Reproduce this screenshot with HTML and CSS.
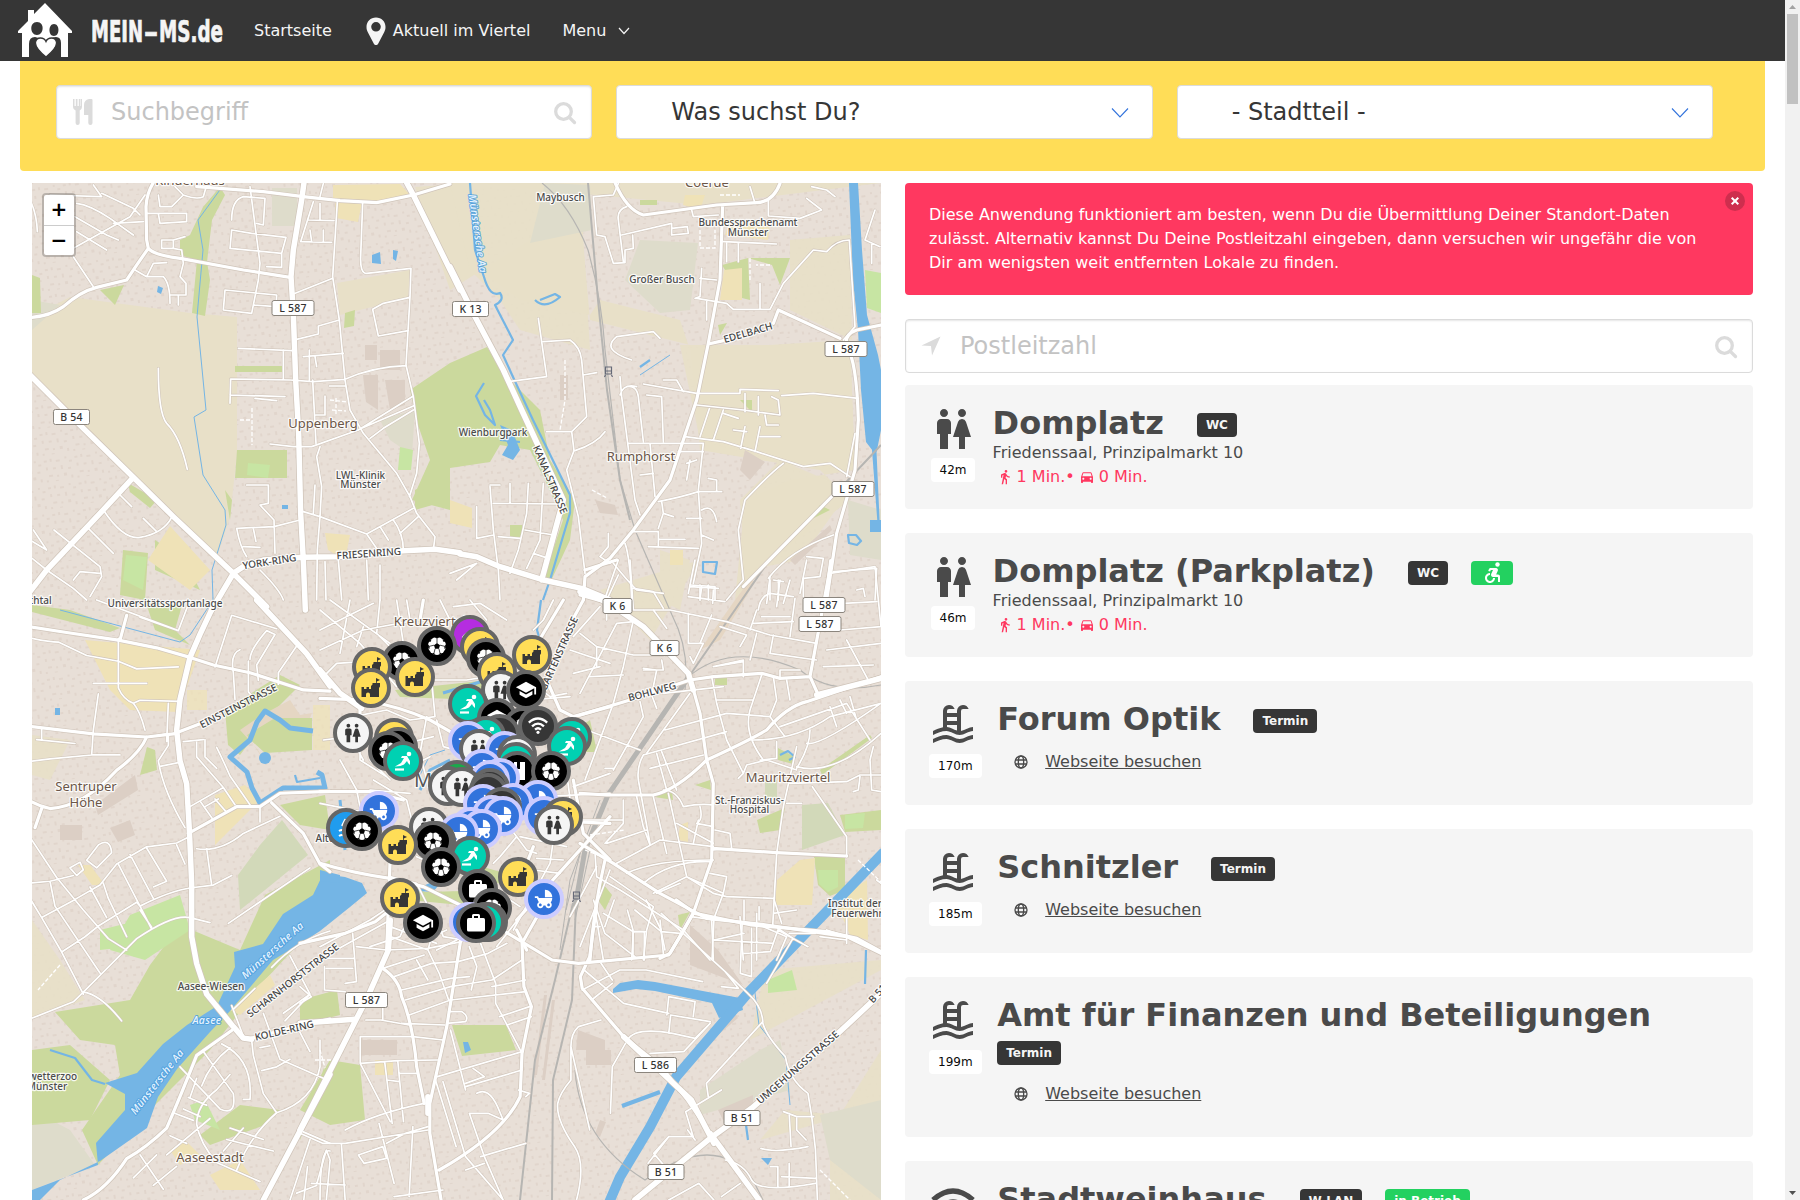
FILE: index.html
```html
<!DOCTYPE html>
<html lang="de">
<head>
<meta charset="utf-8">
<title>MEIN-MS.de</title>
<link rel="stylesheet" href="styles.css">
</head>
<body>
<svg class="sprite" width="0" height="0" aria-hidden="true">
<defs>
<symbol id="i-wc" viewBox="0 0 24 24"><path d="M5.500 22v-7.500H4V9c0-1.100.9-2 2-2h3c1.100 0 2 .9 2 2v5.500H9.500V22h-4zM18 22v-6h3l-2.540-7.630A2.010 2.010 0 0 0 16.560 7h-.12a2 2 0 0 0-1.900 1.370L12 16h3v6h3zM7.500 6c1.110 0 2-.89 2-2s-.89-2-2-2-2 .89-2 2 .89 2 2 2zm9 0c1.110 0 2-.89 2-2s-.89-2-2-2-2 .89-2 2 .89 2 2 2z"/></symbol>
<symbol id="i-pool" viewBox="0 0 24 24"><path d="M2 15c1.670-.75 3.330-1.500 5-1.830V5a3 3 0 0 1 3-3c1.310 0 2.420.83 2.830 2H10a1 1 0 0 0-1 1v1h5V5a3 3 0 0 1 3-3c1.310 0 2.420.83 2.830 2H17a1 1 0 0 0-1 1v9.940c2-.32 4-1.940 6-1.940v2c-2.220 0-4.440 2-6.670 2-2.220 0-4.440-2-6.660-2-2.230 0-4.450 1-6.670 2v-2m12-7H9v2h5V8m0 4H9v1c1.670.16 3.330 1.310 5 1.790V12M2 19c2.220-1 4.440-2 6.670-2 2.220 0 4.440 2 6.660 2 2.230 0 4.450-2 6.670-2v2c-2.220 0-4.440 2-6.670 2-2.220 0-4.440-2-6.660-2-2.230 0-4.450 1-6.670 2v-2z"/></symbol>
<symbol id="i-wifi" viewBox="0 0 24 24"><g fill="none" stroke="currentColor" stroke-width="2.600"><path d="M2 9.500Q12 .5 22 9.500"/><path d="M5.500 13.500Q12 7.500 18.500 13.500"/><path d="M8.800 17Q12 14 15.200 17"/></g><circle cx="12" cy="20" r="1.700"/></symbol>
<symbol id="i-walk" viewBox="0 0 24 24"><path d="M13.500 5.500c1.100 0 2-.9 2-2s-.9-2-2-2-2 .9-2 2 .9 2 2 2zM9.800 8.900L7 23h2.100l1.800-8 2.100 2v6h2v-7.500l-2.100-2 .6-3C14.800 12 16.800 13 19 13v-2c-1.900 0-3.500-1-4.300-2.400l-1-1.600c-.4-.6-1-1-1.700-1-.3 0-.5.1-.8.1L6 8.300V13h2V9.600l1.800-.7"/></symbol>
<symbol id="i-car" viewBox="0 0 24 24"><path d="M18.920 6.010C18.720 5.420 18.160 5 17.500 5h-11c-.66 0-1.210.42-1.420 1.010L3 12v8c0 .55.45 1 1 1h1c.55 0 1-.45 1-1v-1h12v1c0 .55.45 1 1 1h1c.55 0 1-.45 1-1v-8l-2.080-5.990zM6.500 16c-.83 0-1.500-.67-1.500-1.500S5.670 13 6.500 13s1.500.67 1.500 1.500S7.330 16 6.500 16zm11 0c-.83 0-1.500-.67-1.500-1.500s.67-1.500 1.500-1.500 1.500.67 1.500 1.500-.67 1.500-1.500 1.500zM5 11l1.500-4.500h11L19 11H5z"/></symbol>
<symbol id="i-globe" viewBox="0 0 24 24"><g fill="none" stroke="currentColor" stroke-width="2"><circle cx="12" cy="12" r="9"/><ellipse cx="12" cy="12" rx="4" ry="9"/><path d="M3.500 9h17M3.500 15h17"/></g></symbol>
<symbol id="i-access" viewBox="0 0 24 24"><circle cx="17.500" cy="3.500" r="2.200"/><path d="M15 17h-2c0 1.650-1.350 3-3 3s-3-1.350-3-3 1.350-3 3-3v-2c-2.760 0-5 2.240-5 5s2.240 5 5 5 5-2.240 5-5zm3-3.500h-1.860l1.670-3.670C18.420 8.500 17.440 7 15.960 7h-5.200c-.81 0-1.540.47-1.870 1.200L8.220 10l1.920.53.65-1.530H13l-1.830 4.100c-.6 1.330.39 2.900 1.850 2.900H18v5h2v-5.500c0-1.100-.9-2-2-2z"/></symbol>
<symbol id="i-search" viewBox="0 0 24 24"><g fill="none" stroke="currentColor" stroke-width="3.300" stroke-linecap="round"><circle cx="10.500" cy="10.500" r="7.800"/><path d="M16.800 16.800L21.500 21.500"/></g></symbol>
<symbol id="i-school" viewBox="0 0 24 24"><path d="M5 13.180v4L12 21l7-3.820v-4L12 17l-7-3.820zM12 3L1 9l11 6 9-4.910V17h2V9L12 3z"/></symbol>
<symbol id="i-pram" viewBox="0 0 24 24"><path d="M13 2v8h8c0-4.420-3.580-8-8-8zm6.320 13.890C20.370 14.540 21 12.840 21 11H6.440l-.95-2H2v2h2.220s1.890 4.070 2.120 4.420c-1.100.59-1.840 1.750-1.840 3.080C4.500 20.430 6.070 22 8 22c1.760 0 3.220-1.300 3.460-3h2.080c.24 1.700 1.700 3 3.460 3 1.930 0 3.500-1.570 3.500-3.500 0-1.040-.46-1.970-1.180-2.610zM8 20c-.83 0-1.500-.67-1.500-1.500S7.170 17 8 17s1.500.67 1.500 1.500S8.830 20 8 20zm9 0c-.83 0-1.500-.67-1.500-1.500S16.170 17 17 17s1.500.67 1.500 1.500S17.830 20 17 20z"/></symbol>
<g id="m-ball"><circle r="18" fill="#000" stroke="#666" stroke-width="4"/><circle r="9" fill="#fff"/><path d="M0-3L3-.8 1.900 2.700h-3.800L-3-.8zM-2.500-8.700L0-7.200l2.500-1.500q-2.500-.7-5 0zM9-1.500L7.200.2 7.700 3.200l1.100-1.200zM-9-1.500L-7.200.2-7.700 3.200l-1.100-1.200zM5.300 7.300L2.800 7l-.8 1.900zM-5.300 7.300L-2.800 7l.8 1.900zM5.700-7l.3 2.600 2.200.4zM-5.700-7l-.3 2.600-2.200.4z" fill="#000"/><path d="M0-3v-4M3-.8l4.200 1M1.900 2.700L3 7M-1.900 2.700L-3 7M-3-.8l-4.200 1" stroke="#000" stroke-width=".7"/></g>
<g id="m-castle"><circle r="18" fill="#ffdd57" stroke="#666" stroke-width="4"/><path d="M-9.500 9V-1h2.500v2h2.500v-2h2.500v2H0v-3l1.500-1.500V-5H5v-5l4 2-3.200 1.500V-5H9v3.500L8 0v9H-1V6.500a2 2 0 0 0-4 0V9z" fill="#363636"/></g>
<g id="m-wc"><circle r="18" fill="#f5f5f5" stroke="#666" stroke-width="4"/><use href="#i-wc" x="-11.500" y="-11" width="22" height="22" fill="#363636"/></g>
<g id="m-slide"><circle r="18" fill="#00d1b2" stroke="#666" stroke-width="4"/><path d="M-8 8.500H1" stroke="#fff" stroke-width="2.200"/><path d="M-8 5.500l6-3.500 3-5-3 0 1-2H4l3 5 0 4-2-2-1-2-3 3.500q-3 2-8.500 2z" fill="#fff"/><circle cx="6" cy="-7" r="2.300" fill="#fff"/></g>
<g id="m-pram"><circle r="18" fill="#3273dc" stroke="#ccf" stroke-width="4"/><use href="#i-pram" x="-11" y="-11" width="22" height="22" fill="#fff"/></g>
<g id="m-school"><circle r="18" fill="#000" stroke="#666" stroke-width="4"/><use href="#i-school" x="-11" y="-11" width="22" height="22" fill="#fff"/></g>
<g id="m-bag"><circle r="18" fill="#000" stroke="#666" stroke-width="4"/><rect x="-9" y="-5" width="18" height="13.500" rx="1.500" fill="#fff"/><path d="M-3-5v-2.500q0-.5.500-.5h5q.5 0 .5.500V-5" fill="none" stroke="#fff" stroke-width="2"/></g>
<g id="m-dark"><circle r="18" fill="#363636" stroke="#666" stroke-width="4"/></g>
<g id="m-black"><circle r="18" fill="#000" stroke="#666" stroke-width="4"/><path d="M-3-9H8V9H-3z" fill="#fff"/><path d="M0-9h3v7H0z"/></g>
<g id="m-wifi"><circle r="18" fill="#363636" stroke="#666" stroke-width="4"/><use href="#i-wifi" x="-11" y="-12" width="22" height="22" fill="#fff" color="#fff"/></g>
<g id="m-swim"><circle r="18" fill="#209cee" stroke="#666" stroke-width="4"/><path d="M-7 3q3-2 6 0t6 0M-7 8q3-2 6 0t6 0M-4-2l3-6 5 1" fill="none" stroke="#fff" stroke-width="2"/></g>
<pattern id="houses" width="31" height="27" patternUnits="userSpaceOnUse" patternTransform="rotate(-9)"><path d="M2 3h3v2H2zM8 2h2v3H8zM14 4h4v2h-4zM23 2h2v2h-2zM27 6h3v2h-3zM3 10h2v3H3zM10 11h3v2h-3zM18 10h2v4h-2zM25 13h3v2h-3zM5 18h4v2H5zM13 19h2v2h-2zM20 18h3v3h-3zM27 21h2v3h-2zM2 23h2v2H2zM11 24h3v1h-3z" fill="#dccfc5"/></pattern>

<g id="minor">
<g transform="translate(30 180) scale(.33333)">
<path d="M130 205L300 110 345 45M140 70Q180 75 240 115L310 165M215 40L310 85 330 105M135 110L230 165 265 180M140 155L230 210M130 230L190 320M190 15L215 50 60 45M250 130L340 125M350 100H470V125L390 130 385 100M385 45L390 80 425 80 460 45 435 20M460 45Q500 60 520 50L530 15M0 60Q20 100 22 155"/>
<path d="M395 180H430V205H395ZM430 180L465 170M430 205L455 210 460 250 450 290 468 310V345H420M315 270L350 290 370 250 410 248M350 290H400Q420 310 420 370M445 345V375"/>
<path d="M605 120Q605 60 640 50L705 55 700 135 680 130M660 20L690 250 685 300 665 400M605 150L600 205 755 220 768 172 665 160ZM755 220L755 262 710 260M585 330L580 390 665 400M585 330L740 345 738 380 672 375M850 65L812 185 905 187M870 70V120M835 120L912 122M840 150L845 185M880 150V185M880 10L870 50"/>
<path d="M922 65L908 290 928 420 945 600 960 690 1000 760 1100 880 1140 950 1160 1000 1215 1070 1210 1110M908 295L790 342M928 420L865 438V462L800 478M998 68L992 230Q990 280 1010 280L1143 265 1140 350 1128 555 1150 650 1168 790 1160 880 1138 950M1140 352L1060 370 1028 388 1045 468 1135 452M1128 557Q1030 560 945 598L850 605 780 600 602 597 600 670M760 510V600M625 505L785 512M600 645L765 650M675 655L740 662M838 510V600M820 530L940 520M855 530L860 560M848 600L858 790M885 648V705H858M945 618H898M1150 648L985 750M1150 678L995 745M1150 690L1060 745 1020 775M985 750L845 800 790 800 720 792"/>
<path d="M870 800L860 830 875 920 870 1010 862 1110 860 1260M855 915L850 1000M820 995L870 1010 1010 1062 1050 1120M1010 1062L1150 985M1050 1040L1075 1080M1090 1020Q1120 1060 1120 1110M1165 1010L1110 1060M650 915L715 915V970L690 975 732 1020 735 1120M620 1045L732 1040 810 1020M620 1045Q630 1100 650 1130M670 1045L678 1085M640 1100L690 1102M270 945L305 980M220 990Q280 1080 330 1072 400 1060 425 1012M340 1015L380 1055M175 1045L250 1120M72 1050L210 1160 215 1190 180 1250M130 1200L150 1175 210 1180M0 1130L50 1170 130 1225 170 1260M0 1080L50 1110 10 1050M385 565Q385 700 410 730 450 770 472 868M885 1145L888 1260M925 1140L935 1260M1010 1140L1015 1260M1050 1155V1260M690 1170Q750 1230 760 1260"/>
</g>
<g transform="translate(450 180) scale(.33333)">
<path d="M430 50L490 45 505 10M430 50L440 165 465 170 490 250 525 248 525 210 550 205 548 165M530 80Q500 90 505 120L520 245M515 165L665 130 665 165 715 160 712 140 665 145M725 90L730 110 805 105M955 60V108L1050 115 1115 90 1070 55M900 20L915 70M1085 20L1130 30 1155 50M755 265L750 350 735 355M750 295L800 300M820 185L980 192M830 190V245M865 190V245M740 355L830 370 850 388 960 388 1000 310M1000 310L1090 210 1130 215Q1160 180 1198 180L1215 440 1180 480M930 310V388M985 390L970 430M770 365V420M265 415L290 590 175 605M280 485L360 480Q390 500 395 540L410 710 365 755M290 755L365 755 372 812 350 870 385 1010 405 1180M375 812Q440 790 465 755M400 585L440 578M545 540Q450 510 500 470L610 455 630 475"/>
<path d="M510 590L515 650 555 960 570 1005M530 620Q560 615 565 650L580 785M510 645Q520 610 560 620M590 645L635 650 640 785M535 790L760 790M600 790L615 950M570 885L610 880M580 612L740 640 870 640 870 628 985 632M995 647L1090 640 1225 655M640 600L680 600 700 635M740 675L880 690 990 705 985 660 965 650M780 680L750 770M820 690L790 780M885 640V695M925 650V705M945 705L950 735 985 735M705 770L820 785 920 815 1060 860 1140 850 1200 890M885 740L872 805M930 740L915 815M930 770H990M850 750L890 755M820 700L865 715M685 815H760M760 790L745 930 755 1090 730 1210M720 840L710 900M740 840L710 850M775 895L800 900V935M745 935H815M625 965Q700 950 745 935M635 965L640 1000 670 1010M640 1000L625 1045M710 1015H755M755 990Q790 970 800 1025M755 1065L790 1080M550 1055L625 1055 625 1100M595 1100L745 1105M625 1078H705"/>
<path d="M1000 850Q960 880 885 960L865 1050 880 1200 830 1260M955 1195Q1020 1110 1150 1065M1070 1130L1120 1135 1110 1190M1060 1250L1060 1195 1110 1190M1150 1175L1280 1165 1275 1260M970 1200L1000 1205M960 1200V1260M985 1200V1260M1215 760L1190 890M1275 90L1245 180 1290 200M1265 190V250M120 920L130 1050 145 1170 150 1260M150 915H120M130 970L330 972M80 980V1075L130 1065M180 910V970M235 910L230 1000 205 1110 180 1180M280 910L270 1080 230 1165M145 1070L210 1075M225 1050L310 1065M250 1120L295 1135M0 1180L80 1150M80 1150L20 1200M475 1060V1100L450 1130 480 1150M525 1090Q540 1130 545 1260M490 1150Q530 1200 560 1230L640 1240M505 1185L470 1260M720 1215L795 1220V1260M750 1215V1260M775 1215V1260"/>
</g>
<g transform="translate(30 600) scale(.33333 .38265)">
<path d="M6 100Q60 110 85 110L170 145 265 160 320 180 445 175M265 100L265 230Q280 260 310 270 330 290 345 340M310 270L330 262 450 265M190 218H350M205 245L190 340 185 405M0 422L60 415 185 405 270 405M35 335V365M20 365L135 375M415 270L410 370M480 0L445 80 200 0M445 80L330 45M345 360L410 350M415 350V380L385 420Q400 500 465 595M390 435L445 425M460 370L520 365M500 368V410L580 490 615 535M525 365V410L560 440M560 385Q580 420 600 460L660 535M480 540L580 490M510 525L550 575M555 520L590 555M525 540L565 520M605 40L740 75M605 40L555 175M630 130Q600 140 610 190L615 260M660 155Q660 130 710 80L735 90 680 170 685 210M655 160V240L665 250M800 120L745 190 745 220M0 740L60 735 130 720M0 620L80 725 160 810 235 885 290 915M0 780L35 830 95 920 160 1030M60 735L75 800 210 975M35 830L130 785 210 745 260 690 350 645 440 635 475 620M95 920L165 880 205 852 320 790 330 800Q420 760 485 752L550 745 605 720M220 740L235 780 290 880M120 700L150 685 160 705 140 720ZM170 680L200 700 245 660Q240 620 205 640ZM180 750L230 830M265 690L330 800 365 860M300 665L370 780M350 648L410 735 370 750M330 810L365 855M160 1025L320 885Q430 820 480 830L540 843M0 1095L130 1050 160 1025Q210 1030 275 1100"/>
<path d="M500 650Q570 660 640 610L750 565M530 650L545 745M690 540V580M440 640L465 690M595 845L840 700M515 1270Q540 1210 600 1170M520 1180L610 1290Q620 1350 570 1330L450 1220M575 1160Q670 1200 660 1305L640 1305M665 1150L670 1190 700 1290 740 1340M690 1170L720 1165M695 1230L740 1220 780 1200M780 930L840 1030 760 1080M725 960Q800 890 900 865M840 1030L765 1100M610 1070L675 1015M640 1140L605 1060M700 1080L750 1200 880 1250M810 1130L840 1180M870 1150V1220Q850 1310 740 1340 660 1400 620 1490M500 1250L480 1300M475 1300L530 1320M460 1330L510 1350M430 1340L490 1360M500 1370Q500 1320 560 1280L600 1240M500 1370Q510 1420 560 1470L690 1520M420 1400L470 1420M410 1450L540 1355M640 1380L580 1440M600 1380L700 1410M590 1410L730 1440M330 1450L400 1540M310 1510L380 1450M370 1530L440 1480M820 1390L900 1420M840 1410L780 1568M870 1568Q870 1430 900 1440M860 1530L800 1550"/>
</g>
<g transform="translate(320 600)  scale(.33333)">
<path d="M0 30L120 130 230 260M0 90L100 40 160 10M30 0L210 130M90 0L60 160M130 80L110 140M180 0L170 100 210 140M0 150L130 90 290 60M230 0L250 130 280 190M260 0L270 60M360 0L390 60M350 90L330 190 345 350M400 20L480 10 560 60M450 0L500 60M130 185L50 190 20 220M340 240L440 240 560 220M345 350L270 360 200 330 100 350M700 0L670 60 640 90M840 20L760 110M750 150L870 190M760 220L840 200M740 280L690 290 640 250M760 350L720 410 650 420M630 300L750 290M120 360V480L200 530M150 480L210 540M320 350L300 460 320 540M350 360L370 440 440 460M260 430L340 410M270 500L330 470M10 420L90 410 130 480M860 30V60"/>
</g>
<g transform="translate(320 760) scale(.33333)">
<path d="M60 0L110 90 120 140M0 130L100 150 190 170M150 90L270 100M160 60L260 120 290 240M210 350L290 370 320 430M290 290L380 330M560 190L620 270 650 280M590 230L540 290 520 310M600 230L740 260M660 110L870 100M700 240L690 310 580 510M650 295L730 300M640 330L720 340M600 470L530 560M740 40L760 190M760 80L870 40M830 320L750 470M870 330L780 560M570 420L600 440M350 480L370 530 430 540M410 540L350 570M0 560L150 480 210 440M280 440L240 530 150 560M210 500L350 550"/>
</g>
<g transform="translate(300 900) scale(.37628 .33333)">
<path d="M0 210L240 60M140 100L150 245 120 250M65 200V270L120 275M70 175H145M70 205H140M0 260L30 290 0 310M150 140L230 150 340 145 430 125M240 110L340 150 350 110 390 90M220 205L330 165M250 230L350 190 420 185 500 160 550 130M270 270L400 235 450 230M280 300L400 260 510 240 590 180M290 345L400 300 600 275M310 180L340 240M340 150L370 220 395 300M450 140L470 200 455 270M480 130L520 250 520 310 590 460M510 260L600 240M530 350L610 320M550 375L615 350M395 335H430Q450 350 440 365L390 370M270 370L385 375M175 360H215L290 375M220 310V360M160 410L300 410 380 420M160 410V490L260 482 365 480M160 490L240 665M225 485L245 670M260 485L275 665M365 530L590 455M400 390L440 570M440 550L490 530 460 505M440 560L590 510M470 580Q500 560 525 620L540 660M230 540L265 545M265 520L310 520M380 545L440 770 540 900M360 540L415 740M120 690Q200 640 330 610M0 700L60 730 120 730 340 690M110 730L120 900M155 765L220 740 230 775 170 790ZM210 670L250 850M230 730L280 700 340 680M300 680L290 890M20 800L10 900M30 850L120 855M45 850L70 750 80 780 70 900M450 640L490 770 540 900M480 770L600 730M440 810L490 790M450 640L500 640 540 660M600 590L610 580 580 570M250 890L380 870"/>
<path d="M780 0L810 100 890 170M835 0L810 80M870 30L885 90 885 170M885 95H915V180M890 30L960 95 970 150M920 0L960 90M960 95L1010 100M960 40L1130 215 1190 280M1040 50L1100 60 1095 180M1100 120L1180 100M1175 70L1170 220 1200 230 1200 85M1130 215L1165 265 1120 260M1180 160L1250 155 1270 90M1190 280Q1230 320 1230 370 1240 410 1290 470 1300 540 1350 580L1360 650 1370 750 1375 900M1270 85L1310 115 1240 250M800 360L740 380Q720 400 720 440L770 690M720 440L720 540Q690 580 685 610 680 660 730 740 760 790 735 900M865 430L830 500 825 640M870 420Q890 380 990 400L1050 415 1090 370M1090 365L985 345 980 400M1090 370L1020 455 930 460M980 290L975 345M980 290L1050 305 1045 350M750 270L850 210 920 210 1070 245M755 210L860 310 980 340M775 300L830 250M800 190L830 240M1230 365L1080 550 1085 590M1120 570L1025 635 1045 710 980 710 925 790M1030 690L1050 720M980 710L940 760 970 800M1285 635L1320 650 1365 650M1300 640L1305 740M1320 655V690L1345 720M1225 745Q1260 760 1350 740M1250 800H1270V860M1280 830L1370 835M1300 790V860M1130 780Q1180 790 1200 840 1220 880 1370 850M980 900L1060 850 1100 900M1120 890L1170 850M1180 0L1180 60M1220 20V60M1260 0L1280 70M1270 90L1350 140M1300 100L1370 100"/>
</g>
<g transform="translate(580 560) scale(.33333)">
<path d="M0 220L50 260 160 285 250 285M50 260V320M0 400L110 190 160 185M115 0L70 130M150 0L160 150M160 85L220 95 250 145M160 150L270 150M220 150L260 205M270 150L440 185 570 225 710 250M345 0L325 100M330 80L415 85M365 80L360 120M400 90L398 130M325 110L435 125M325 160V250L370 250 340 310 330 290M395 165L360 250M30 350L130 345M160 180L130 320 100 430 15 660M190 325L230 330 215 405 230 445M245 300L250 330 190 330M180 425L190 470 100 630M75 625L100 625M250 400L430 380M20 510L180 570M200 580L330 400M190 585L440 515M190 585Q170 620 175 660L210 850M230 580L260 690M245 575L290 690M210 625L370 585M255 510L440 460 570 470M395 350L410 430 440 540 490 640 475 655M410 420H520M545 345L510 450Q490 520 550 600M490 350V300L400 320 490 305M420 200L500 225 480 260M530 220L510 300M580 225L570 280 710 300M600 350V330L660 330M620 360L630 420M580 350L590 420 570 470 615 530M680 0L660 100M750 40L885 20 903 200M830 90L850 85 855 110M790 130L890 125M780 210L903 200M740 270L903 250M730 320L880 315M800 240L870 370M520 540Q650 540 750 470L903 430M600 500L800 430 870 540M690 510Q690 560 650 625M680 550Q720 560 903 430M650 620Q760 650 903 520M770 500L750 440M800 460L780 420M830 480L810 410M490 640L500 615 560 600 650 630M540 600L590 595 590 545M545 170H630M535 150Q540 110 570 100L640 110M570 50L560 130M600 60L590 140M630 60L610 130M510 210L530 150M520 190L640 185M645 115L630 230M750 0L740 80M650 560L610 740 590 880 578 1100M620 730H665M697 680L800 830V890M630 670L800 665 840 645 903 645M840 650L835 690 820 695M880 560L870 600 875 690 903 695M0 780H130M130 720V790L75 850M80 850L200 810M170 710L190 800 210 855M220 710L260 880M265 700L320 950M310 740Q360 730 400 735M310 740Q290 690 250 690M360 740Q370 780 350 790L400 800M355 780L340 850M290 790L400 850M110 910L240 840 400 860M140 940Q220 900 400 900M190 970Q270 900 395 905M220 1000L320 950 400 1000M320 950L430 1000M230 1000L300 970M400 1000L440 1010 580 1015M390 940L440 950 430 1000 400 1080M395 870L455 865 450 820 405 810M45 880L50 950 120 990 200 1040M90 950L220 1040 200 1110 190 1200M45 1050L70 1200M70 1060L160 1115 155 1200M40 1100L60 1100M160 1115H195M240 1080L250 1180M200 1040L310 1110 390 1200M480 1070L490 1200M395 1080L400 1200M530 1060L530 1200M400 1140L580 1150M580 1060L650 1050M550 1100L620 1130 590 1200M720 1130L800 1140M800 1070L800 1150M740 1110L800 1130M890 960L903 970"/>
</g>
</g>
<g id="mid">
<g transform="translate(30 180) scale(.33333)"><path d="M370 8Q350 40 348 80L350 180 355 205Q330 240 290 300L200 322Q150 335 100 380 60 408 6 412M355 205Q370 225 450 235L640 270 780 292M500 20L700 35 820 50 930 62 1040 68 1150 45 1260 12"/></g>
<g transform="translate(450 180) scale(.33333)"><path d="M495 8Q530 90 580 105L800 75 920 68Q970 65 990 10M818 75L810 300 775 490 740 660 660 900 550 1050 480 1135 405 1190 400 1260M775 492L820 482M970 430L985 390 1170 475M1293 435L1220 450Q1180 465 1190 500 1220 540 1225 720L1215 870 1160 1060 1130 1260M1150 945L880 1220"/></g>
<g transform="translate(30 600) scale(.33333 .38265)"><path d="M0 70L110 85 265 105 380 125 480 150 550 170 660 190 820 235 900 238M290 40L270 105M0 330L190 350 350 358 430 350 520 320M350 358Q330 400 260 445 160 540 60 545 30 540 0 525M35 545L15 595M475 610L620 540 690 540 750 505 900 500M725 530L820 610 870 690 900 710M900 1095L820 1110 665 1145M605 1125L500 1190Q450 1300 410 1380 350 1430 290 1460 230 1540 160 1568"/></g>
<g transform="translate(320 600) scale(.33333)"><path d="M0 295L130 300Q240 320 330 360L400 400M120 320V380M730 0L640 150M790 0L730 110 680 240 720 330 760 350 870 320M310 0L300 60"/></g>
<g transform="translate(320 760) scale(.33333)"><path d="M0 95H150L250 120M210 310L200 570M0 310Q100 340 210 355L310 380 450 450M590 480L870 170M640 260L600 360M760 60L790 220 870 300M590 510L620 570M650 180L870 190"/></g>
<g transform="translate(300 900) scale(.37628 .33333)"><path d="M0 130L120 100 200 65 250 20M220 205Q265 240 270 290 300 370 310 500L330 610M430 100L390 380 345 610 345 700 375 900M640 30L590 130 595 260 615 320 590 460 585 590Q540 700 370 810M545 95L670 180 740 190 980 165 1010 110 1045 40 M790 0L770 170 745 230 750 265 860 410 960 500 1030 600 1090 700 1220 900M1000 0L1050 40 1200 75 1400 95 1480 115 1544 155"/></g>
<g transform="translate(580 560) scale(.33333)"><path d="M0 465L150 420 330 360 400 350 545 340 600 355 690 350 715 405M0 700L80 705 220 705Q290 690 380 600 510 540 560 510 620 440 680 425L903 350M755 0L690 350M335 370L360 460 380 600 400 670 395 900 340 1060 270 1180 240 1195M0 850L100 910 240 1000 380 1075 560 1095 800 1130 903 1180M75 900Q40 1050 30 1200M398 865L590 878 800 888M0 105L90 130M15 30L110 0"/></g>
</g>
<g id="major">
<g transform="translate(30 180) scale(.33333)"><path d="M822 8L815 60 790 210 783 290 790 400 797 600 806 760 812 1000 820 1140 826 1290M0 585L160 745 310 892 430 1010 610 1180 710 1280M610 1180L640 1160 700 1140 820 1132 920 1130 1120 1112 1215 1108 1290 1118M310 892L215 995 50 1170 0 1235M1130 8L1150 45 1290 330M610 1180L545 1290"/></g>
<g transform="translate(450 180) scale(.33333)"><path d="M0 260L75 410 160 570 215 690 340 960 275 1200M30 1122L80 1130 150 1160 280 1200 395 1225 480 1260"/></g>
<g transform="translate(30 600) scale(.33333 .38265)"><path d="M680 0L830 140 900 225M545 25L510 90 480 150 450 260 440 340 450 420 470 480 478 600 485 740 485 880 500 950 530 1030 610 1115 640 1145 665 1148M900 1240L700 1568"/></g>
<g transform="translate(320 600) scale(.33333)"><path d="M0 210L60 280 125 325"/></g>
<g transform="translate(300 900) scale(.37628 .33333)"><path d="M240 60L235 150 180 290 0 690M0 370L145 358M340 590V640M1544 280L1430 400 1200 625 1090 715 890 900M1090 700L1220 900M860 410L1040 600 1100 730"/></g>
<g transform="translate(580 560) scale(.33333)"><path d="M0 95L80 125 190 200 325 340 340 390M903 355L710 405"/></g>
</g>
</defs>
</svg>

<div class="window">
<div class="page">
<nav class="navbar">
  <a class="brand">
    <svg class="logo" viewBox="0 0 54 54" width="54" height="54"><path fill="#fff" fill-rule="evenodd" d="M0 28L10 18V7h6v4L27 0 54 28v2H50v24H43V40q0-6-5-6-4 0-6 3-4-2-5 1-2-3-5-1-2-3-5-3-6 0-6 7V54H4V30H0zM19 19c-8 0-7 13 0 13s8-13 0-13zM36 21c-6 0-6 12 0 12s6-12 0-12z"/><path fill="#fff" stroke="#363636" stroke-width="1.300" d="M28 54Q17 45 17.500 39.500 18 35 22.500 35 26.500 35 28 38.500 29.500 35 33.500 35 38 35 38.500 39.500 39 45 28 54z"/></svg>
    <svg class="wordmark" viewBox="0 0 132 30" width="132" height="30"><text x="-1" y="26" textLength="52" lengthAdjust="spacingAndGlyphs">MEIN</text><text x="52" y="26" textLength="14" lengthAdjust="spacingAndGlyphs">–</text><text x="67" y="26" textLength="64" lengthAdjust="spacingAndGlyphs">MS.de</text></svg>
  </a>
  <a class="nav-start">Startseite</a>
  <a class="nav-local"><svg viewBox="0 0 20 28" width="20" height="28"><path fill="#f5f5f5" fill-rule="evenodd" d="M10 .5C4.500.5.5 4.600.5 10c0 2 .5 3.500 1.200 5L8 27q2 2.200 4 0l6.300-12c.7-1.500 1.200-3 1.200-5C19.500 4.600 15.500.5 10 .5zM10 5a4.800 4.800 0 1 1 0 9.600A4.800 4.800 0 0 1 10 5z"/></svg>Aktuell im Viertel</a>
  <a class="nav-menu">Menu<svg viewBox="0 0 12 8" width="12" height="8"><path d="M1 1l5 5.500L11 1" fill="none" stroke="#f5f5f5" stroke-width="1.200"/></svg></a>
</nav>

<section class="filters">
  <div class="control">
    <svg class="icon-left" viewBox="0 0 20 26" width="20" height="26"><path d="M0 0h1.500v7h1.300V0h1.700v7h1.300V0h1.700v7h.5V0H9v8q0 2-2.300 3.500V24q0 2-2.100 2-2 0-2-2V11.500Q0 10 0 8zM19.500 1v23q0 2-2.200 2-2 0-2-2v-8H11V6q0-5 5-6h2.500q1 0 1 1z" fill="#dbdbdb"/></svg>
    <input class="field" placeholder="Suchbegriff">
    <svg class="icon-right" viewBox="0 0 24 24" width="24" height="24"><use href="#i-search"/></svg>
  </div>
  <div class="control">
    <select class="field"><option>Was suchst Du?</option></select>
    <svg class="caret" viewBox="0 0 18 10" width="18" height="10"><path d="M1 .5l8 8.500L17 .5" fill="none" stroke="#3273dc" stroke-width="1.100"/></svg>
  </div>
  <div class="control">
    <select class="field"><option>- Stadtteil -</option></select>
    <svg class="caret" viewBox="0 0 18 10" width="18" height="10"><path d="M1 .5l8 8.500L17 .5" fill="none" stroke="#3273dc" stroke-width="1.100"/></svg>
  </div>
</section>

<main class="columns">
<div class="map">
<svg viewBox="32 183 849 1017" width="849" height="1017">
<rect x="32" y="183" width="849" height="1017" fill="#e8dfd7"/>
<rect x="32" y="183" width="849" height="1017" fill="url(#houses)" opacity=".6"/>
<g fill="#e8e0c8">
<path d="M32 317L70 297 190 313 237 317 237 453 230 517 217 557 180 523 130 477 32 377zM337 283L410 270 408 298 340 315zM415 187L472 183 700 205 880 183H472L480 270 520 300 590 315 600 300 680 320 690 350 850 340 855 470 790 480 745 500 735 600 770 560 850 500 820 470 700 450 690 345 590 320 580 210 530 240 450 290z"/>
<path d="M450 183H580L590 350 520 330 500 300 470 270zM680 345L850 345 855 470 790 465 700 440zM790 240L850 235 852 340 790 310zM660 550L690 560 680 610 660 600zM740 500L780 460 850 490 800 560 745 570zM32 735L70 740 50 780 32 775zM32 920L60 960 85 1000 32 1018zM750 1040L765 970 881 960V1050L840 1115 785 1110 760 1140 830 1120V1200H881V970zM600 590L700 560 650 640z" opacity=".9"/>
</g>
<g fill="#dedccb">
<path d="M545 183L590 185 592 230 530 243zM640 240L698 243 690 310 660 313 625 280zM32 300L60 305 32 330zM272 188H297V226H272zM380 420L415 410 412 455 390 440zM820 1115L881 1100V1200L830 1160zM700 1090L760 1050 780 1040 790 1090 700 1115zM32 1110L70 1130 95 1165 32 1190zM848 500L881 510V560L850 555z"/>
<path d="M802 805L828 803 845 835 802 850zM765 780h12v18h-12zM238 875L260 845 282 820 308 855 265 890 240 910z" fill="#d2d9b9"/>
</g>
<g fill="#cbd99d">
<path d="M203 207L220 187 225 195 212 220 207 262 210 280 205 316 192 313 197 260 180 255 180 240 190 235zM100 290L124 285 115 305zM32 275L40 278 41 313 32 313zM235 366H282V372H235zM237 450H287V478H235zM128 483L157 500 150 508 130 492zM123 550L148 553 145 600 120 595zM345 313L355 310 354 326 344 328zM225 490L232 500 230 520zM155 540L185 560 200 590 155 570z"/>
<path d="M450 363L487 347 505 375 540 410 550 460 575 500 570 540 550 583 543 580 563 520 545 480 530 450 500 445 490 462 450 468zM410 390L450 363 450 510 412 500 430 460 418 425zM415 490L450 470 450 500 415 510zM722 265L748 258 750 300 742 298zM748 258L790 258 780 285 772 265zM640 200H657V205H640zM718 325L727 323 720 335zM510 525h12v13h-12z"/>
<path d="M32 605L70 610 120 628 110 632 32 612zM145 600L182 605 175 630 190 645 155 630zM225 710L280 675 300 685 270 715 240 755 228 745zM245 725L275 718H312V750L265 753 245 735zM147 747L155 750 157 770 140 775zM280 805L325 795 330 830 300 825zM55 1012L130 1000 150 965 180 925 240 950 265 895 330 860 330 910 265 980 210 1050 150 1110 98 1165 82 1130 120 1075 115 1045 80 1040z"/>
<path d="M32 1050L70 1045 110 1080 90 1120 32 1125zM200 1135L240 1105 280 1110 265 1125 210 1145zM300 1000L337 990 340 1015 300 1025zM300 1110L330 1060 360 1065 365 1120 330 1125zM300 1135L325 1065 320 1090 300 1140zM452 1025L506 1025 516 1050 462 1056zM395 690L490 680 500 685 480 700 400 697zM575 730L590 720 597 752 575 752zM695 785L710 780 711 790zM655 797L672 790 673 800zM757 820L785 808 780 830 760 833zM840 815L881 810V830L845 832zM814 857L845 857 845 890 830 896 818 885zM600 880L612 895 605 910 598 900zM678 915L690 912 680 930zM820 770L870 735 872 738 822 775zM740 400H752V412zM820 505L830 510 810 520zM715 675h12v10h-12zM440 855l90 25-5 10-80-20z"/>
<path d="M778 748L795 757 793 764 778 760zM400 880L425 892 500 890 505 905 460 905 410 900z"/>
</g>
<g fill="#c7e5a3">
<path d="M248 463L270 465 268 478 247 475zM400 447L413 450 411 470 398 470zM126 555L147 557 143 590 123 580zM865 270L881 273V313L867 308zM100 930L140 920 145 945 100 950zM130 915L180 895 190 930 145 960 110 950zM768 980L792 970 797 990 768 993zM818 870h20v17l-10 5-9-8zM845 815l20-2-2 15-18 1zM190 1105L205 1100 220 1130 195 1120z"/>
</g>
<g fill="#efe2b7">
<path d="M333 185L400 184 410 195 375 203 333 198zM335 203L362 202 358 222 336 218zM85 640L200 650 178 712 130 710 110 690zM170 526L210 570 190 590 148 560zM325 533L350 535 345 560 328 550zM724 270L742 268V300H720zM730 220L770 222 768 240 725 235zM685 195L705 195 700 210 683 205zM215 795L245 785 260 800 215 845zM78 865L90 865 105 885 92 885zM800 860L815 858 812 905 775 905 777 880zM835 900L867 880 868 940 850 935zM230 1010L270 975 275 985 240 1015zM170 1150L185 1140 200 1155 180 1165zM210 1175L240 1160 260 1190 220 1190zM670 550h13v15h-13zM450 500l22 8v20l-22-5zM375 1060h18v15h-18zM680 825l8-3v20l-10-2z"/>
<path d="M313 705h17v45h-17zM187 690h20v20h-20z" opacity=".7"/>
</g>
<g fill="#dccfc5">
<path d="M365 345h12v15h-12zM380 350h20v20h-20zM363 375h15v35l-12-8zM385 380h20v25l-15 5zM95 805L135 775 138 790 98 815zM60 825h22v15h-22zM110 828L130 820 135 835 118 842zM745 450L765 462 750 480 740 470zM595 500L615 505 618 515 600 513zM560 375h8v25h-8zM790 560L830 525 832 530 795 565zM690 925L718 950 743 985 690 965zM578 1030L605 1040V1050H576zM586 1050h25v15h-25zM715 1025L733 1010 738 1018 718 1035zM361 1040H397V1055H361zM544 995h3l-10 80h-3zM552 1000h3l-10 80h-3zM718 1110L753 1095V1108L723 1120zM600 1120l6 2-6 15-5-3z"/>
</g>
<path fill="#e5d6c3" d="M262 715L290 700 300 715 312 713 310 718 275 718 247 735 265 762 258 750 240 730zM700 650L735 600 750 580 755 582 720 640z"/>

<g class="water">
<path d="M849 183H858L862 250 867 315 878 355 881 370V430L876 455 866 442 861 390 858 330 853 280zM876 440L880 530 878 530 872 450zM870 520h11v12h-11z"/>
<path d="M32 1190L98 1165 96 1143 125 1110 125 1094 105 1083 137 1073 163 1044 187 1025 217 1006 235 967 234 952 263 944 283 914 313 895 323 874 345 877 362 883 367 893 350 907 320 931 300 944 273 960 230 1011 210 1032 177 1069 158 1097 147 1128 100 1161 60 1180 40 1200H32zM613 989L620 983 638 980 655 982 740 998 743 1010 719 1018 712 1003 655 991 636 989 613 993zM372 255l8-3 1 12-9-1zM393 250l5 1-2 10-3-2zM158 286l5 2-2 6-4-2zM55 708h5v7h-5zM282 505h6v4h-6z"/>
<circle cx="265" cy="758" r="6"/>
<path d="M500 425L512 430 520 450 513 460 502 455 508 445zM463 1042L468 1042 471 1050 465 1053zM761 1158h11l-4 7zM418 888l12-5 8 3-5 6-15-1zM320 870l20 5v8l-20-2z"/>
</g>
<g class="water-line">
<path stroke-width="10" d="M884 852L748 993 676 1077 650 1127 620 1177 608 1205"/>
<path stroke-width="4" d="M622 1106L660 1092"/>
<path stroke-width="5" d="M313 731L290 728 280 720 265 711 257 722 250 740 230 757 247 772 252 788 260 803 283 788 325 788 322 775 317 772"/>
<path stroke-width="2.200" d="M470 183L475 250 484 277Q490 298 500 293 505 300 495 305L513 340 503 355 513 377 533 420 570 495 570 513 550 580 543 600M541 600L537 630 540 640M484 383L476 396 485 415 495 425 490 410 484 400M500 440L520 442M535 300Q545 310 560 297L555 294 540 300M650 360L640 367M703 562h14l-2 12-12-2zM848 535h8l5 6-4 4-8-2zM295 775L297 782 320 778M50 1050L75 1058 92 1080 105 1084M780 755l8-4 7 6-6 3M866 950l-1 34M746 1125l2 15"/>
<path stroke-width="1" d="M222 187L198 220 203 250 197 317 206 410 194 417 203 475 225 510 226 525 212 570 213 600 190 635 180 642 60 610M670 355L640 375M754 985l5 40 27 35 4 45M420 775l10-20 15-5M470 775l-35 20"/>
<path stroke-width="3" d="M443 693L480 682M340 800L345 850M450 760L430 770 420 790"/>
</g>

<g class="rail">
<path stroke-width="1.200" d="M542 183Q570 205 588 250 602 300 605 350L620 480 635 530 672 615Q690 650 685 690M687 678Q730 640 800 670 830 695 881 685M575 1070Q580 1140 645 1180 715 1130 753 1180L763 1200"/>
<path stroke-width="2" d="M881 445L820 510M588 183L598 300 607 390 620 480 630 520M768 562L690 675M573 903L555 980 535 1060 520 1200M576 903L572 1000 553 1080 552 1200"/>
<path stroke-width="5" d="M690 675L608 795 585 850 575 907"/>
<path stroke-width="1" d="M600 800L570 880 560 950M590 850L575 920M581 850L566 910"/>
</g>

<use href="#minor" class="casing c1"/><use href="#mid" class="casing c2"/><use href="#major" class="casing c3"/>
<use href="#minor" class="road r1"/><use href="#mid" class="road r2"/><use href="#major" class="road r3"/>
<path class="foot" d="M252 408V445M240 420h12M330 400l18 2M332 410l14 1M336 398v18M565 360v40l-5 30M592 490l15 8M700 230v18h15v-18M750 258v22M770 265h-14M720 195h20M60 965L38 990M820 1170l30 30M858 860l23 22M315 1060h20M320 1050l5 18M590 835l35-5M585 850l20 8"/>

<g class="lbl place">
<text x="323" y="428">Uppenberg</text><text x="641" y="461">Rumphorst</text><text x="430" y="626">Kreuzviertel</text><text x="788" y="782">Mauritzviertel</text><text x="86" y="791">Sentruper</text><text x="86" y="807">Höhe</text><text x="210" y="1162">Aaseestadt</text><text x="190" y="185">Kinderhaus</text><text x="707" y="187">Coerde</text><text x="423" y="787" class="city">M</text>
</g>
<g class="lbl poi">
<text x="560.500" y="200.500">Maybusch</text><text x="748" y="226">Bundessprachenamt</text><text x="748" y="236">Münster</text><text x="662" y="282.500">Großer Busch</text><text x="493" y="435.500">Wienburgpark</text><text x="360.500" y="478.500">LWL-Klinik</text><text x="360.500" y="488">Münster</text><text x="165" y="607">Universitätssportanlage</text><text x="749.500" y="803.500">St.-Franziskus-</text><text x="749.500" y="813">Hospital</text><text x="855" y="907">Institut der</text><text x="857" y="916.500">Feuerwehr</text><text x="211" y="989.500">Aasee-Wiesen</text><text x="53" y="1080">wetterzoo</text><text x="47" y="1090">Münster</text><text x="325" y="842">Alte</text><text x="40" y="604">chtal</text>
</g>
<g class="lbl street">
<text transform="translate(749 336) rotate(-16)">EDELBACH</text><text transform="translate(547 481) rotate(67)">KANALSTRASSE</text><text transform="translate(369 557) rotate(-4)">FRIESENRING</text><text transform="translate(270 565) rotate(-9)">YORK-RING</text><text transform="translate(240 709) rotate(-27)">EINSTEINSTRASSE</text><text transform="translate(295 983) rotate(-38)">SCHARNHORSTSTRASSE</text><text transform="translate(285 1034) rotate(-13)">KOLDE-RING</text><text transform="translate(653 695) rotate(-15)">BOHLWEG</text><text transform="translate(562 655) rotate(-66)">GARTENSTRASSE</text><text transform="translate(800 1070) rotate(-41)">UMGEHUNGSSTRASSE</text><text transform="translate(880 996) rotate(-48)">B 51</text>
</g>
<g class="lbl wlbl">
<text transform="translate(474 234) rotate(82)">Münstersche Aa</text><text transform="translate(275 953) rotate(-42)">Münstersche Aa</text><text transform="translate(160 1084) rotate(-52)">Münstersche Aa</text><text x="207" y="1024">Aasee</text>
</g>
<g class="shield">
<rect x="272" y="300.500" width="42" height="15" rx="2"/><rect x="452.500" y="301.500" width="36" height="15" rx="2"/><rect x="53.500" y="409.500" width="36" height="15" rx="2"/><rect x="825" y="341.500" width="42" height="15" rx="2"/><rect x="832" y="481.500" width="42" height="15" rx="2"/><rect x="603" y="598.500" width="29" height="15" rx="2"/><rect x="650" y="640.500" width="29" height="15" rx="2"/><rect x="803" y="597.500" width="42" height="15" rx="2"/><rect x="799" y="616.500" width="42" height="15" rx="2"/><rect x="345.500" y="992.500" width="42" height="15" rx="2"/><rect x="634.500" y="1057.500" width="42" height="15" rx="2"/><rect x="724" y="1110.500" width="36" height="15" rx="2"/><rect x="648" y="1164.500" width="36" height="15" rx="2"/>
<text x="293" y="312">L 587</text><text x="470.500" y="313">K 13</text><text x="71.500" y="421">B 54</text><text x="846" y="353">L 587</text><text x="853" y="493">L 587</text><text x="617.500" y="610">K 6</text><text x="664.500" y="652">K 6</text><text x="824" y="609">L 587</text><text x="820" y="628">L 587</text><text x="366.500" y="1004">L 587</text><text x="655.500" y="1069">L 586</text><text x="742" y="1122">B 51</text><text x="666" y="1176">B 51</text>
</g>
<g class="station"><path d="M605.500 367h6v7h-6zM606 371h5M605.500 375l-1 2M611.500 375l1 2M573.500 892h6v7h-6zM574 896h5M573.500 900l-1 2M579.500 900l1 2"/></g>

<g class="pins" transform="translate(20 20)">
<g transform="translate(450 615)"><circle r="18" fill="#b52de0" stroke="#666" stroke-width="4"/><path d="M-7 3q7-10 14 0" stroke="#fff" stroke-width="3" fill="none"/></g>
<use href="#m-castle" x="460" y="627"/><use href="#m-ball" x="382" y="641"/><use href="#m-ball" x="417" y="626"/><use href="#m-castle" x="352" y="647"/><use href="#m-ball" x="466" y="638"/><use href="#m-castle" x="512" y="635"/><use href="#m-castle" x="477" y="652"/><use href="#m-castle" x="395" y="657"/><use href="#m-castle" x="351" y="668"/><use href="#m-wc" x="481" y="670"/><use href="#m-school" x="506" y="670"/><use href="#m-slide" x="448" y="684"/><use href="#m-school" x="477" y="698"/><use href="#m-ball" x="503" y="707"/><use href="#m-wc" x="333" y="713"/><use href="#m-castle" x="374" y="718"/><use href="#m-slide" x="552" y="717"/><use href="#m-dark" x="480" y="714"/><use href="#m-wifi" x="518" y="706"/><use href="#m-slide" x="547" y="726"/><use href="#m-slide" x="466" y="716"/><use href="#m-pram" x="448" y="721"/><use href="#m-ball" x="378" y="727"/><use href="#m-ball" x="368" y="731"/><use href="#m-wc" x="459" y="729"/><use href="#m-pram" x="485" y="731"/><use href="#m-wc" x="497" y="735"/><use href="#m-slide" x="496" y="742"/><use href="#m-slide" x="383" y="741"/>
<use href="#m-pram" x="462" y="749"/><use href="#m-black" x="497" y="751"/><use href="#m-ball" x="531" y="751"/><g transform="translate(437 760)"><circle r="18" fill="#1aa94b" stroke="#666" stroke-width="4"/></g><use href="#m-pram" x="480" y="758"/><use href="#m-pram" x="470" y="760"/><use href="#m-wc" x="428" y="766"/><use href="#m-wc" x="442" y="767"/><use href="#m-dark" x="470" y="768"/><use href="#m-dark" x="468" y="773"/><use href="#m-pram" x="518" y="780"/><use href="#m-pram" x="493" y="783"/><use href="#m-pram" x="463" y="784"/><use href="#m-dark" x="482" y="787"/>
<use href="#m-pram" x="359" y="791"/><use href="#m-pram" x="472" y="795"/><use href="#m-pram" x="483" y="796"/><use href="#m-pram" x="524" y="796"/><use href="#m-castle" x="543" y="797"/><use href="#m-wc" x="534" y="805"/><use href="#m-wc" x="409" y="807"/><use href="#m-pram" x="451" y="807"/><use href="#m-swim" x="326" y="808"/><use href="#m-pram" x="462" y="809"/><use href="#m-ball" x="342" y="811"/><use href="#m-pram" x="439" y="813"/><use href="#m-dark" x="416" y="821"/><use href="#m-ball" x="413" y="821"/><use href="#m-castle" x="378" y="825"/><use href="#m-slide" x="450" y="836"/><use href="#m-ball" x="421" y="847"/><use href="#m-castle" x="498" y="857"/><use href="#m-bag" x="458" y="869"/><use href="#m-castle" x="380" y="878"/><use href="#m-pram" x="524" y="879"/><use href="#m-ball" x="472" y="888"/><use href="#m-dark" x="468" y="902"/><use href="#m-pram" x="449" y="902"/><use href="#m-slide" x="465" y="902"/><use href="#m-school" x="403" y="903"/><use href="#m-bag" x="456" y="903"/>
</g>
</svg>
<div class="zoom"><span>+</span><span>−</span></div>
</div>

<div class="results">
  <div class="alert"><p>Diese Anwendung funktioniert am besten, wenn Du die Übermittlung Deiner Standort-Daten zulässt. Alternativ kannst Du Deine Postleitzahl eingeben, dann versuchen wir ungefähr die von Dir am wenigsten weit entfernten Lokale zu finden.</p><svg class="close" viewBox="0 0 20 20" width="20" height="20"><circle cx="10" cy="10" r="10" fill="#0a0a0a" fill-opacity=".2"/><path d="M6.700 6.700l6.600 6.600M13.300 6.700l-6.600 6.600" stroke="#fff" stroke-width="2"/></svg></div>
  <div class="control zip">
    <svg class="icon-left" viewBox="0 0 20 20" width="20" height="20"><path d="M19.500.5L11 19.500 10 10 .5 9.500z" fill="#dbdbdb"/></svg>
    <input class="field" placeholder="Postleitzahl">
    <svg class="icon-right" viewBox="0 0 24 24" width="24" height="24"><use href="#i-search"/></svg>
  </div>

  <article class="card"><div class="side"><svg><use href="#i-wc"/></svg><span class="dist">42m</span></div><div class="body"><div class="head"><h2>Domplatz</h2><span class="tag">WC</span></div><p>Friedenssaal, Prinzipalmarkt 10</p><p class="times"><svg><use href="#i-walk"/></svg>1 Min.<i>•</i><svg><use href="#i-car"/></svg>0 Min.</p></div></article>
  <article class="card"><div class="side"><svg><use href="#i-wc"/></svg><span class="dist">46m</span></div><div class="body"><div class="head"><h2>Domplatz (Parkplatz)</h2><span class="tag">WC</span><span class="tag ok"><svg><use href="#i-access"/></svg></span></div><p>Friedenssaal, Prinzipalmarkt 10</p><p class="times"><svg><use href="#i-walk"/></svg>1 Min.<i>•</i><svg><use href="#i-car"/></svg>0 Min.</p></div></article>
  <article class="card"><div class="side"><svg><use href="#i-pool"/></svg><span class="dist">170m</span></div><div class="body"><div class="head"><h2>Forum Optik</h2><span class="tag">Termin</span></div><p class="site"><svg><use href="#i-globe"/></svg><a>Webseite besuchen</a></p></div></article>
  <article class="card"><div class="side"><svg><use href="#i-pool"/></svg><span class="dist">185m</span></div><div class="body"><div class="head"><h2>Schnitzler</h2><span class="tag">Termin</span></div><p class="site"><svg><use href="#i-globe"/></svg><a>Webseite besuchen</a></p></div></article>
  <article class="card"><div class="side"><svg><use href="#i-pool"/></svg><span class="dist">199m</span></div><div class="body"><div class="head"><h2>Amt für Finanzen und Beteiligungen</h2><span class="tag">Termin</span></div><p class="site"><svg><use href="#i-globe"/></svg><a>Webseite besuchen</a></p></div></article>
  <article class="card"><div class="side"><svg><use href="#i-wifi"/></svg><span class="dist">204m</span></div><div class="body"><div class="head"><h2>Stadtweinhaus</h2><span class="tag">W-LAN</span><span class="tag ok">in Betrieb</span></div></div></article>
</div>
</main>
</div>
<div class="scrollbar"><svg viewBox="0 0 15 14" width="15" height="14"><path d="M4 9l3.500-4L11 9z" fill="#a3a3a3"/></svg><div class="thumb"></div><svg class="down" viewBox="0 0 15 14" width="15" height="14"><path d="M4 5l3.500 4L11 5z" fill="#505050"/></svg></div>
</div>
</body>
</html>
```
FILE: styles.css
```css
* { box-sizing: border-box; }
body { margin: 0; background: #fff; color: #4a4a4a; font: 16px/24px "DejaVu Sans", sans-serif; }
p, h2 { margin: 0; }
.sprite { display: block; }
.window { display: flex; height: 1200px; overflow: hidden; }
.page { flex: 1; height: 1200px; overflow: hidden; }
.scrollbar { width: 15px; background: #f1f1f1; display: flex; flex-direction: column; align-items: center; }
.thumb { width: 11px; height: 90px; background: #c1c1c1; }
.down { margin-top: auto; }

.navbar { height: 61px; background: #363636; color: #f5f5f5; display: flex; align-items: center; padding-left: 18px; }
.brand { display: flex; align-items: center; gap: 20px; }
.logo { margin-top: -2px; }
.wordmark text { font: bold 30px "DejaVu Sans Condensed", "DejaVu Sans", sans-serif; fill: #f5f5f5; stroke: #f5f5f5; stroke-width: .7px; }
.nav-start { margin-left: 30px; }
.nav-local { display: flex; align-items: center; gap: 7px; margin-left: 34px; }
.nav-menu { display: flex; align-items: center; gap: 12px; margin-left: 32px; }

.filters { margin: 0 20px; height: 110px; background: #ffdd57; border-radius: 0 0 4px 4px; padding: 24px 52px 0 36px; display: flex; gap: 24px; }
.control { position: relative; flex: 1; height: 54px; }
.field { display: block; width: 100%; height: 54px; border: 1px solid #dbdbdb; border-radius: 4px; background: #fff; color: #363636; font: 24px/36px "DejaVu Sans", sans-serif; padding: 7px 54px; appearance: none; outline: none; }
input.field { box-shadow: inset 0 1px 2px rgba(10, 10, 10, .1); }
.field::placeholder { color: #c3c3c3; opacity: 1; }
select.field { padding-left: 54px; }
.icon-left { position: absolute; left: 17px; top: 50%; transform: translateY(-50%); }
.icon-right { position: absolute; right: 15px; top: 16px; color: #dbdbdb; fill: #dbdbdb; }
.caret { position: absolute; right: 24px; top: 23px; }

.columns { display: flex; gap: 24px; padding: 12px 32px 0; }
.map { position: relative; width: 849px; height: 1017px; flex: none; overflow: hidden; }
.map > svg { display: block; }
.zoom { position: absolute; left: 10px; top: 10px; border: 2px solid rgba(0, 0, 0, .2); border-radius: 4px; background-clip: padding-box; background-color: #fff; }
.zoom span { display: flex; align-items: center; justify-content: center; width: 30px; height: 30px; font: bold 20px/28px "DejaVu Sans", sans-serif; color: #000; padding-bottom: 2px; }
.zoom span + span { border-top: 1px solid #ccc; }

path { vector-effect: non-scaling-stroke; }
symbol path { vector-effect: none; }
.casing, .road { fill: none; stroke-linejoin: round; stroke-linecap: round; }
.casing { stroke: #d0c5ba; }
.road { stroke: #fff; }
.c1 { stroke-width: 2.8px; }
.c2 { stroke-width: 4.6px; }
.c3 { stroke-width: 7px; }
.r1 { stroke-width: 1.7px; }
.r2 { stroke-width: 3.2px; }
.r3 { stroke-width: 5.5px; }
.foot { fill: none; stroke: #fff; stroke-width: 1.3px; stroke-dasharray: 4 2; }
.water { fill: #74b5e5; }
.water-line { fill: none; stroke: #74b5e5; stroke-linejoin: round; }
.rail { fill: none; stroke: #b6b5b2; }
.station { fill: none; stroke: #666a78; stroke-width: 1.2px; }
.lbl { font-family: "Noto Sans", sans-serif; text-anchor: middle; paint-order: stroke; stroke: #fff; stroke-opacity: .85; stroke-width: 2.4px; stroke-linejoin: round; }
.place { font-size: 13px; fill: #6b5648; }
.place .city { font-size: 20px; fill: #555; }
.poi { font-size: 10px; font-weight: 500; fill: #4c4c4c; }
.street { font-size: 10px; font-weight: 500; fill: #444; }
.wlbl { font-size: 10.5px; font-style: italic; font-weight: 500; letter-spacing: .3px; fill: #e8f4ff; stroke: #4e9fdd; stroke-width: 2px; }
.shield rect { fill: #fff; stroke: #8b857d; stroke-width: 1px; }
.shield text { font: 500 10.5px "Noto Sans", sans-serif; letter-spacing: .2px; fill: #333; text-anchor: middle; }

.results { flex: 1; }
.alert { position: relative; background: #ff3860; color: #fff; border-radius: 4px; padding: 20px 40px 20px 24px; margin-bottom: 24px; }
.close { position: absolute; right: 8px; top: 8px; }
.zip { margin-bottom: 12px; }
.zip .icon-left { left: 16px; }
.card { background: #f5f5f5; border-radius: 4px; padding: 20px 24px; display: flex; gap: 15.6px; min-height: 124.1px; margin-bottom: 24px; }
.side { display: flex; flex-direction: column; align-items: flex-start; }
.side svg { width: 48px; height: 48px; fill: #4a4a4a; color: #4a4a4a; }
.dist { align-self: center; background: #fff; color: #0a0a0a; border-radius: 4px; font-size: 12px; line-height: 24px; height: 24px; padding: 0 9px; margin-top: 5px; }
.body { flex: 1; }
.head { display: flex; flex-wrap: wrap; column-gap: 33px; }
.head h2 { font-size: 32px; line-height: 36px; font-weight: bold; }
.tag { display: flex; align-items: center; height: 24px; margin: 8px 0 4px; padding: 0 9px; border-radius: 4px; background: #363636; color: #f5f5f5; font-size: 12px; font-weight: bold; }
.tag + .tag { margin-left: -10px; }
.tag.ok { background: #23d160; color: #fff; }
.tag svg { width: 24px; height: 24px; fill: #fff; }
.times { display: flex; align-items: center; color: #ff3860; padding-left: 4px; }
.times svg { width: 16px; height: 16px; fill: #ff3860; margin-right: 4px; }
.times i { font-style: normal; margin-right: 4px; }
.site { display: flex; align-items: center; margin: 12.5px 0 11.5px; padding-left: 16px; }
.site svg { width: 16px; height: 16px; color: #4a4a4a; margin-right: 16px; }
.site a { text-decoration: underline; }
```
